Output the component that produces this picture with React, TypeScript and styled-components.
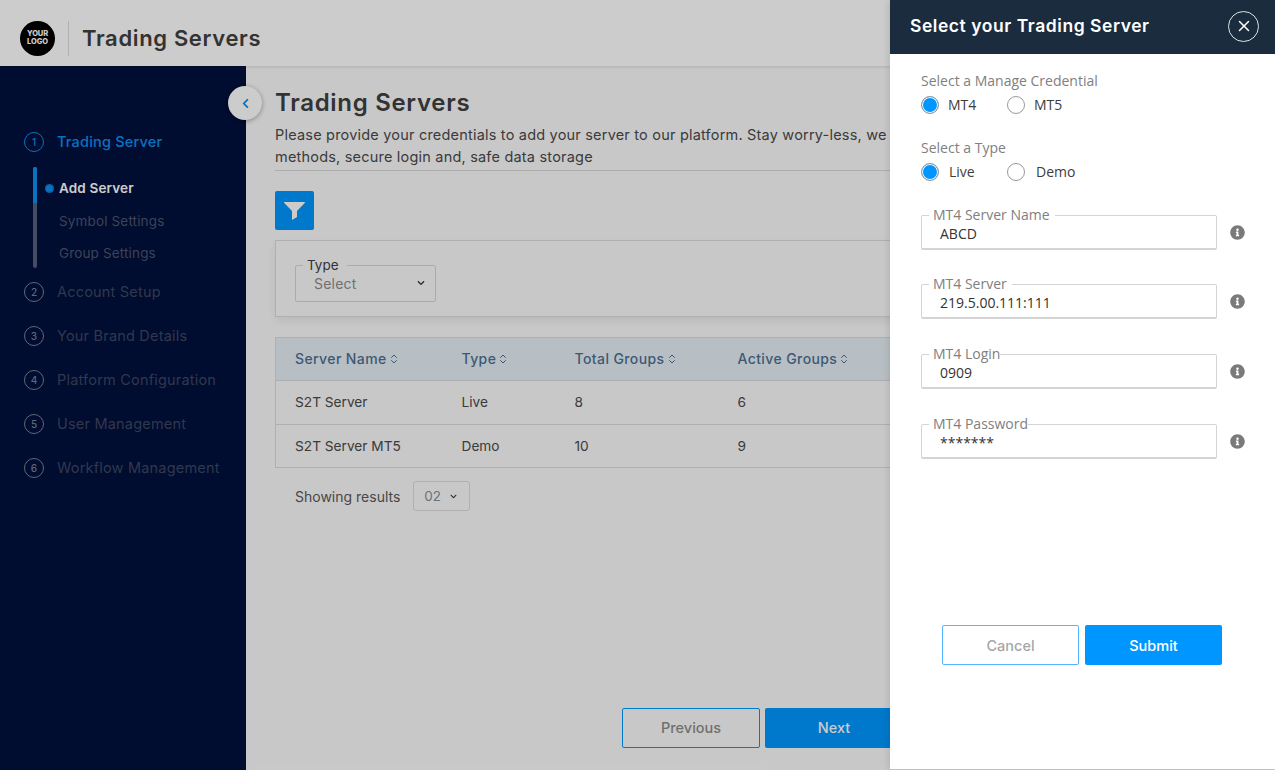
import React from "react";
import styled, { createGlobalStyle } from "styled-components";
import { FaInfoCircle, FaChevronDown, FaChevronLeft } from "react-icons/fa";
import { X, ChevronsUpDown } from "lucide-react";

const Poppins = `Inter, "Liberation Sans", sans-serif`;
const OpenSans = `"Open Sans", "Liberation Sans", sans-serif`;

const Global = createGlobalStyle`
  html, body { margin: 0; padding: 0; height: 100%; overflow: hidden; background: #fbfbfb; }
  * { box-sizing: border-box; }
`;

const Shell = styled.div`
  position: relative;
  width: 1275px;
  height: 770px;
  overflow: hidden;
  font-family: ${Poppins};
  background: #fbfbfb;
`;
const Header = styled.header`
  height: 66px;
  display: flex;
  align-items: center;
  padding-left: 20px;
  background: #ffffff;
  box-shadow: 0 2px 2px rgba(0, 0, 0, 0.08);
  position: relative;
  z-index: 1;
`;
const Logo = styled.div`
  width: 35px;
  height: 35px;
  margin-top: 10px;
  border-radius: 50%;
  background: #000;
  color: #fff;
  font-size: 7.5px;
  line-height: 8px;
  font-weight: 800;
  display: flex;
  align-items: center;
  justify-content: center;
  text-align: center;
  letter-spacing: -0.1px;
`;
const HeaderDivider = styled.div`
  width: 1px;
  height: 35px;
  margin: 10px 13px 0 13px;
  background: #dcdcdc;
`;
const HeaderTitle = styled.h1`
  margin: 10px 0 0 0;
  font-size: 22px;
  font-weight: 600;
  color: #404040;
  letter-spacing: 0.65px;
`;
const Body = styled.div`
  display: flex;
  height: 704px;
`;
const Sidebar = styled.nav`
  position: relative;
  width: 246px;
  flex: none;
  background: #00103d;
  padding: 66px 0 0 24px;
`;
const Collapse = styled.button`
  position: absolute;
  top: 20px;
  right: -16px;
  width: 34px;
  height: 34px;
  border: none;
  border-radius: 50%;
  background: #fff;
  color: #0a8ef0;
  box-shadow: 0 1px 5px rgba(0, 0, 0, 0.35);
  display: flex;
  align-items: center;
  justify-content: center;
  padding: 0;
  z-index: 2;
`;
const Step = styled.div<{ $active?: boolean }>`
  display: flex;
  align-items: center;
  height: 20px;
  padding-bottom: 2px;
  margin-bottom: 24px;
  color: ${(p) => (p.$active ? "#0e8ff0" : "#3f4660")};
  font-size: 14.5px;
  font-weight: ${(p) => (p.$active ? 500 : 400)};
  letter-spacing: 0.2px;
  white-space: nowrap;
`;
const StepNum = styled.span<{ $active?: boolean }>`
  width: 20px;
  height: 20px;
  flex: none;
  margin-top: 2px;
  border-radius: 50%;
  border: 1px solid ${(p) => (p.$active ? "#0e8ff0" : "#7b8194")};
  color: ${(p) => (p.$active ? "#0e8ff0" : "#7b8194")};
  font-size: 10px;
  font-weight: 500;
  display: flex;
  align-items: center;
  justify-content: center;
  margin-right: 13px;
  letter-spacing: 0;
`;
const SubSteps = styled.div`
  position: relative;
  height: 101px;
  margin: -9px 0 14px 9px;
  width: 4px;
  background: #57607a;
  border-radius: 2px;
`;
const SubProgress = styled.div`
  position: absolute;
  left: 0;
  top: 0;
  width: 4px;
  height: 36px;
  background: #0e8ff0;
  border-radius: 2px 2px 0 0;
`;
const SubList = styled.div`
  position: absolute;
  left: 26px;
  top: 11px;
  display: flex;
  flex-direction: column;
  gap: 12.5px;
  white-space: nowrap;
`;
const SubItem = styled.div<{ $active?: boolean }>`
  position: relative;
  height: 20px;
  line-height: 20px;
  font-size: 13.5px;
  letter-spacing: 0.15px;
  font-weight: ${(p) => (p.$active ? 600 : 400)};
  color: ${(p) => (p.$active ? "#fff" : "#4d546b")};
`;
const SubDot = styled.span`
  position: absolute;
  left: -14px;
  top: 6px;
  width: 9px;
  height: 9px;
  border-radius: 50%;
  background: #0e8ff0;
  box-shadow: inset 0 0 0 1px #00103d;
  outline: 1px solid #0e8ff0;
  outline-offset: -1px;
`;
const Main = styled.main`
  flex: 1;
  min-width: 0;
  padding: 20px 29px 0 29px;
`;
const PageTitle = styled.h2`
  margin: 0;
  height: 34px;
  line-height: 34px;
  font-size: 24px;
  font-weight: 600;
  color: #404040;
  letter-spacing: 0.7px;
`;
const Description = styled.p`
  margin: 4px 0 0;
  padding-bottom: 2px;
  line-height: 22px;
  font-size: 14.5px;
  color: #4a4a4a;
  letter-spacing: 0.2px;
  border-bottom: 1px solid #d8d8d8;
  white-space: nowrap;
`;
const FilterButton = styled.button`
  display: flex;
  align-items: center;
  justify-content: center;
  width: 39px;
  height: 39px;
  margin-top: 20px;
  padding: 0;
  border: none;
  border-radius: 2px;
  background: #0096ff;
  color: #fff;
`;
const FilterPanel = styled.section`
  height: 77px;
  margin-top: 10px;
  padding: 15px 19px 0;
  background: #fbfbfb;
  border: 1px solid #dcdcdc;
  box-shadow: 0 4px 10px rgba(0, 0, 0, 0.08);
`;
const TypeField = styled.fieldset`
  width: 141px;
  height: 46px;
  margin: 0;
  padding: 0;
  border: 1px solid #d6d6d6;
  border-radius: 2px;
`;
const TypeLegend = styled.legend`
  margin-left: 7px;
  padding: 0 8px 0 4px;
  line-height: 18px;
  font-size: 13.5px;
  color: #404040;
`;
const TypeRow = styled.div`
  display: flex;
  align-items: center;
  justify-content: space-between;
  height: 18px;
  padding: 0 10px 0 18px;
  font-size: 14px;
  letter-spacing: 0.2px;
  color: #8c8c8c;
`;
const DarkChevron = styled(FaChevronDown)`
  color: #333;
`;
const Table = styled.table`
  width: 100%;
  margin-top: 20px;
  border-collapse: collapse;
  table-layout: fixed;
  border: 1px solid #dcdcdc;
  font-size: 14px;
`;
const Th = styled.th<{ $w?: number }>`
  width: ${(p) => (p.$w ? `${p.$w}px` : "auto")};
  height: 43px;
  padding: 0 0 1px 19px;
  text-align: left;
  font-weight: 500;
  letter-spacing: 0.4px;
  color: #4e6f92;
  background: #e6eff6;
  border-bottom: 1px solid #d4dbe0;
`;
const SortLabel = styled.span`
  display: inline-flex;
  align-items: center;
  gap: 1px;
`;
const Td = styled.td`
  height: 44px;
  padding: 0 0 2px 19px;
  font-size: 13.7px;
  color: #4a4a4a;
  border-bottom: 1px solid #dcdcdc;
  tr:last-child > & {
    height: 43px;
    padding-bottom: 0;
  }
`;
const ResultsRow = styled.div`
  display: flex;
  align-items: center;
  margin-top: 13px;
  padding-left: 20px;
  font-size: 14px;
  letter-spacing: 0;
  color: #595959;
`;
const PageSize = styled.div`
  display: flex;
  align-items: center;
  justify-content: space-between;
  width: 57px;
  height: 30px;
  margin-left: 13px;
  padding: 0 12px 0 10px;
  border: 1px solid #dcdcdc;
  border-radius: 3px;
  color: #8c8c8c;
  font-size: 13.5px;
`;
const NavActions = styled.div`
  display: flex;
  gap: 5px;
  margin: 197px 0 0 347px;
`;
const Btn = styled.button<{ $primary?: boolean; $light?: boolean }>`
  width: 138px;
  height: 40px;
  padding: 0 0 1px;
  border-radius: 2px;
  font-family: ${Poppins};
  font-size: 14.5px;
  font-weight: 500;
  border: ${(p) => (p.$primary ? "none" : p.$light ? "1.5px solid #52b6ff" : "1px solid #0096ff")};
  background: ${(p) => (p.$primary ? "#0096ff" : "transparent")};
  color: ${(p) => (p.$primary ? "#fff" : p.$light ? "#a6a6a6" : "#8c8c8c")};
`;
const Scrim = styled.div`
  position: absolute;
  inset: 0;
  background: rgba(0, 0, 0, 0.2);
  z-index: 5;
`;
const Drawer = styled.aside`
  position: absolute;
  top: 0;
  right: 0;
  bottom: 1px;
  width: 385px;
  background: #fff;
  z-index: 6;
  font-family: ${OpenSans};
  box-shadow: -2px 0 6px rgba(0, 0, 0, 0.1);
`;
const DrawerHeader = styled.div`
  height: 54px;
  padding: 0 16px 0 20px;
  display: flex;
  align-items: center;
  justify-content: space-between;
  background: #1a2c3e;
`;
const DrawerTitle = styled.h3`
  margin: 0 0 3px;
  font-family: ${Poppins};
  font-size: 17.5px;
  font-weight: 600;
  color: #fff;
  letter-spacing: 0.55px;
`;
const CloseButton = styled.button`
  width: 31px;
  height: 31px;
  margin-bottom: 2px;
  padding: 0;
  border: 1px solid #dfe3e6;
  border-radius: 50%;
  background: transparent;
  color: #fff;
  display: flex;
  align-items: center;
  justify-content: center;
`;
const DrawerBody = styled.div`
  padding: 17px 0 0 31px;
`;
const GroupLabel = styled.div<{ $gap?: number }>`
  height: 20px;
  line-height: 20px;
  margin-top: ${(p) => p.$gap ?? 0}px;
  font-size: 14px;
  color: #808080;
`;
const RadioRow = styled.div`
  display: flex;
  align-items: center;
  height: 24px;
  margin-top: 2px;
`;
const RadioItem = styled.label<{ $w: number }>`
  display: flex;
  align-items: center;
  width: ${(p) => p.$w}px;
  height: 22px;
  padding-bottom: 2px;
  font-size: 14px;
  font-weight: 500;
  color: #3d3d3d;
`;
const RadioMark = styled.span<{ $on?: boolean; $gap: number }>`
  width: 18px;
  height: 18px;
  flex: none;
  margin-top: 2px;
  margin-right: ${(p) => p.$gap}px;
  border-radius: 50%;
  border: 1px solid #9a9a9a;
  background: ${(p) => (p.$on ? "#0096ff" : "#fff")};
  box-shadow: ${(p) => (p.$on ? "inset 0 0 0 1px #fff" : "none")};
`;
const FieldRow = styled.div<{ $gap: number }>`
  display: flex;
  align-items: flex-end;
  margin-top: ${(p) => p.$gap}px;
`;
const Field = styled.fieldset`
  width: 296px;
  height: 44px;
  margin: 0;
  padding: 0;
  border: 1px solid #d4d4d4;
  border-bottom-width: 2px;
  border-radius: 2px;
  display: block;
`;
const FieldLegend = styled.legend<{ $tight?: boolean }>`
  margin-left: 7px;
  padding: 0 ${(p) => (p.$tight ? 0 : 5)}px 0 4px;
  height: 18px;
  line-height: 18px;
  font-size: 14px;
  color: #808080;
`;
const FieldValue = styled.div`
  height: 24px;
  padding-left: 18px;
  line-height: 20px;
  font-size: 14px;
  font-weight: 500;
  color: #333;
`;
const InfoIcon = styled(FaInfoCircle)`
  margin: 0 0 10px 13px;
  color: #7a7a7a;
`;
const DrawerActions = styled.div`
  display: flex;
  gap: 6px;
  margin: 166px 0 0 21px;
`;
const DrawerBtn = styled(Btn)`
  width: 137px;
  padding: 0;
`;

const steps = ["Account Setup", "Your Brand Details", "Platform Configuration", "User Management", "Workflow Management"];
const fields = [
  { label: "MT4 Server Name", value: "ABCD", gap: 22, tight: false },
  { label: "MT4 Server", value: "219.5.00.111:111", gap: 25, tight: false },
  { label: "MT4 Login", value: "0909", gap: 26, tight: true },
  { label: "MT4 Password", value: "*******", gap: 26, tight: true },
];

const Sort = ({ label }: { label: string }) => (
  <SortLabel>
    {label}
    <ChevronsUpDown size={12} strokeWidth={2} />
  </SortLabel>
);

const FunnelIcon = () => (
  <svg width="21" height="18" viewBox="0 0 21 18" fill="currentColor" aria-hidden="true">
    <path d="M0.5 0H20.5C21 0 21 0.6 20.7 1L13 9V15L8 18V9L0.3 1C0 0.6 0 0 0.5 0Z" />
  </svg>
);

export default function App() {
  return (
    <Shell>
      <Global />
      <Header>
        <Logo>
          YOUR
          <br />
          LOGO
        </Logo>
        <HeaderDivider />
        <HeaderTitle>Trading Servers</HeaderTitle>
      </Header>
      <Body>
        <Sidebar>
          <Collapse aria-label="Collapse">
            <FaChevronLeft size={11} />
          </Collapse>
          <Step $active>
            <StepNum $active>1</StepNum>
            Trading Server
          </Step>
          <SubSteps>
            <SubProgress />
            <SubList>
              <SubItem $active>
                <SubDot />
                Add Server
              </SubItem>
              <SubItem>Symbol Settings</SubItem>
              <SubItem>Group Settings</SubItem>
            </SubList>
          </SubSteps>
          {steps.map((s, i) => (
            <Step key={s}>
              <StepNum>{i + 2}</StepNum>
              {s}
            </Step>
          ))}
        </Sidebar>
        <Main>
          <PageTitle>Trading Servers</PageTitle>
          <Description>
            Please provide your credentials to add your server to our platform. Stay worry-less, we
            <br />
            methods, secure login and, safe data storage
          </Description>
          <FilterButton aria-label="Filter">
            <FunnelIcon />
          </FilterButton>
          <FilterPanel>
            <TypeField>
              <TypeLegend>Type</TypeLegend>
              <TypeRow>
                Select
                <DarkChevron size={8} />
              </TypeRow>
            </TypeField>
          </FilterPanel>
          <Table>
            <thead>
              <tr>
                <Th $w={167}><Sort label="Server Name" /></Th>
                <Th $w={113}><Sort label="Type" /></Th>
                <Th $w={163}><Sort label="Total Groups" /></Th>
                <Th><Sort label="Active Groups" /></Th>
              </tr>
            </thead>
            <tbody>
              <tr>
                <Td>S2T Server</Td>
                <Td>Live</Td>
                <Td>8</Td>
                <Td>6</Td>
              </tr>
              <tr>
                <Td>S2T Server MT5</Td>
                <Td>Demo</Td>
                <Td>10</Td>
                <Td>9</Td>
              </tr>
            </tbody>
          </Table>
          <ResultsRow>
            Showing results
            <PageSize>
              02
              <DarkChevron size={7} />
            </PageSize>
          </ResultsRow>
          <NavActions>
            <Btn>Previous</Btn>
            <Btn $primary>Next</Btn>
          </NavActions>
        </Main>
      </Body>
      <Scrim />
      <Drawer>
        <DrawerHeader>
          <DrawerTitle>Select your Trading Server</DrawerTitle>
          <CloseButton aria-label="Close">
            <X size={18} strokeWidth={2} />
          </CloseButton>
        </DrawerHeader>
        <DrawerBody>
          <GroupLabel>Select a Manage Credential</GroupLabel>
          <RadioRow>
            <RadioItem $w={86}><RadioMark $on $gap={9} />MT4</RadioItem>
            <RadioItem $w={80}><RadioMark $gap={9} />MT5</RadioItem>
          </RadioRow>
          <GroupLabel $gap={21}>Select a Type</GroupLabel>
          <RadioRow>
            <RadioItem $w={86}><RadioMark $on $gap={10} />Live</RadioItem>
            <RadioItem $w={80}><RadioMark $gap={11} />Demo</RadioItem>
          </RadioRow>
          {fields.map((f) => (
            <FieldRow key={f.label} $gap={f.gap}>
              <Field>
                <FieldLegend $tight={f.tight}>{f.label}</FieldLegend>
                <FieldValue>{f.value}</FieldValue>
              </Field>
              <InfoIcon size={15} />
            </FieldRow>
          ))}
          <DrawerActions>
            <DrawerBtn $light>Cancel</DrawerBtn>
            <DrawerBtn $primary>Submit</DrawerBtn>
          </DrawerActions>
        </DrawerBody>
      </Drawer>
    </Shell>
  );
}
